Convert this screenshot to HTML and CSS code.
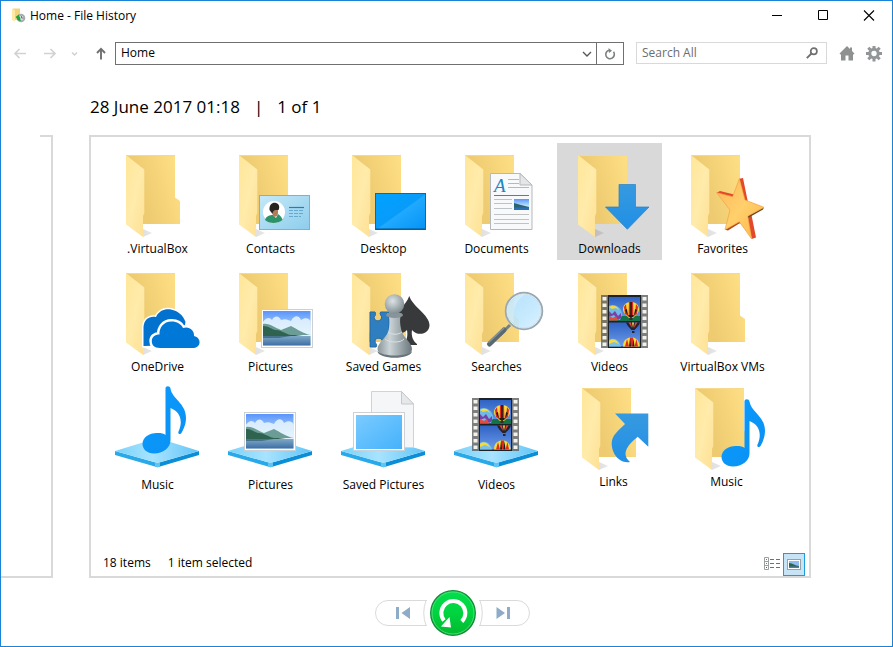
FILE: index.html
```html
<!DOCTYPE html>
<html lang="en">
<head>
<meta charset="utf-8">
<meta name="viewport" content="width=device-width, initial-scale=1">
<title>Home - File History</title>
<link rel="stylesheet" href="styles.css">
</head>
<body>
<svg class="sprite" width="0" height="0" aria-hidden="true">
  <defs>
    <linearGradient id="g-back" x1="0.2" x2="1" y1="0.3" y2="0"><stop offset="0" stop-color="#eecb70"/><stop offset="0.8" stop-color="#fddd83"/><stop offset="1" stop-color="#ffe28c"/></linearGradient>
    <linearGradient id="g-front" x1="0" x2="1" y1="0" y2="1"><stop offset="0" stop-color="#ffe698"/><stop offset="0.5" stop-color="#ffebab"/><stop offset="1" stop-color="#fee093"/></linearGradient>
    <linearGradient id="g-card" x1="0" x2="1" y1="0" y2="1"><stop offset="0" stop-color="#c5e8f8"/><stop offset="1" stop-color="#8dcdec"/></linearGradient>
    <linearGradient id="g-desk" x1="0" x2="1" y1="0" y2="1"><stop offset="0" stop-color="#00a2ff"/><stop offset="0.5" stop-color="#089bfa"/><stop offset="0.52" stop-color="#20a9ff"/><stop offset="1" stop-color="#0493f5"/></linearGradient>
    <linearGradient id="g-sky" x1="0" x2="0" y1="0" y2="1"><stop offset="0" stop-color="#5b94fb"/><stop offset="0.6" stop-color="#b9e2fb"/></linearGradient>
    <linearGradient id="g-water" x1="0" x2="0" y1="0" y2="1"><stop offset="0" stop-color="#7fa9c4"/><stop offset="1" stop-color="#3d6da6"/></linearGradient>
    <linearGradient id="g-arrow" x1="0" x2="0" y1="0" y2="1"><stop offset="0" stop-color="#379ae0"/><stop offset="1" stop-color="#208fe6"/></linearGradient>
    <linearGradient id="g-star" x1="0" x2="1" y1="0" y2="1"><stop offset="0" stop-color="#ffb65a"/><stop offset="0.5" stop-color="#ffd06c"/><stop offset="1" stop-color="#ffb347"/></linearGradient>
    <linearGradient id="g-pawn" x1="0" x2="1" y1="0" y2="0"><stop offset="0" stop-color="#8a9599"/><stop offset="0.35" stop-color="#cbd4d7"/><stop offset="1" stop-color="#6b777c"/></linearGradient>
    <radialGradient id="g-head" cx="0.4" cy="0.35" r="0.7"><stop offset="0" stop-color="#dce3e5"/><stop offset="1" stop-color="#7b878c"/></radialGradient>
    <linearGradient id="g-lens" x1="0" x2="1" y1="0" y2="1"><stop offset="0" stop-color="#a9dcf8"/><stop offset="0.6" stop-color="#c0e7fe"/><stop offset="1" stop-color="#d8f1ff"/></linearGradient>
    <linearGradient id="g-plate" x1="0" x2="1" y1="0" y2="0"><stop offset="0" stop-color="#7ad2fa"/><stop offset="0.45" stop-color="#a8e3ff"/><stop offset="1" stop-color="#62c5f6"/></linearGradient>
    <linearGradient id="g-note" x1="0" x2="1" y1="0" y2="1"><stop offset="0" stop-color="#0a9cff"/><stop offset="0.75" stop-color="#0a93f5"/><stop offset="1" stop-color="#0a84e4"/></linearGradient>
    <linearGradient id="g-blue" x1="0" x2="1" y1="0" y2="1"><stop offset="0" stop-color="#7bcbff"/><stop offset="1" stop-color="#45b2fb"/></linearGradient>
    <linearGradient id="g-film" x1="0" x2="0" y1="0" y2="1"><stop offset="0" stop-color="#2f63c4"/><stop offset="1" stop-color="#6d9bea"/></linearGradient>
    <linearGradient id="g-green" x1="0" x2="0" y1="0" y2="1"><stop offset="0" stop-color="#00e04c"/><stop offset="0.5" stop-color="#00d440"/><stop offset="1" stop-color="#00b92e"/></linearGradient>
    <linearGradient id="g-shade" x1="0" x2="1" y1="0" y2="0"><stop offset="0" stop-color="#000" stop-opacity="0.12"/><stop offset="1" stop-color="#000" stop-opacity="0"/></linearGradient>
  </defs>

  <symbol id="folder" viewBox="0 0 105 96">
    <path d="M75 76L82 78L72 81H75ZM38 86L47 90L38 94Z" fill="url(#g-shade)"/>
    <path d="M21 12H70V54.500L75 58V81H38Z" fill="url(#g-back)"/>
    <path d="M21 12H70L69.500 13H23Z" fill="#f6d98b"/>
    <path d="M21 12L39.300 26.500V70L38 73V94L21 81.500Z" fill="url(#g-front)"/>
  </symbol>

  <symbol id="photo" viewBox="0 0 52 39">
    <rect x="0.500" y="0.500" width="51" height="38" fill="#fff" stroke="#cdd0d2"/>
    <rect x="2" y="2" width="47.500" height="34.500" fill="url(#g-sky)"/>
    <path d="M2 13C5 8 9 8 11 11C14 6 18 7 20 11C25 9 27 11 30 12C33 6 38 6 40 11C44 8 48 9 49.500 12V27H2Z" fill="#e9f6fd" opacity="0.85"/>
    <path d="M2 26V15C9 14 14 19 20 21L30 17C36 20 43 25 49.500 26Z" fill="#6b9c96"/>
    <path d="M2 27V17C8 17 10 20 14 21C20 20 26 27 34 26L49.500 28Z" fill="#2f6350"/>
    <rect x="2" y="27" width="47.500" height="9.500" fill="url(#g-water)"/>
    <path d="M2 27H30L18 29H2Z" fill="#28536b" opacity="0.6"/>
  </symbol>

  <symbol id="balloon" viewBox="0 0 16 18">
    <path d="M8 0C13 0 16 3 16 7.500C16 11 12 14 10 16H6C4 14 0 11 0 7.500C0 3 3 0 8 0Z" fill="#f7d938"/>
    <path d="M3 2L1 5L2 12L5 14L3.500 7ZM6 0H10L10.500 15H5.500ZM13 2L15 5L14 12L11 14L12.500 7Z" fill="#e02b20"/>
    <path d="M7.200 0H8.800V16H7.200ZM2 8L4 7L5 14ZM14 8L12 7L11 14ZM5 13H11L10 15H6Z" fill="#201a1a"/>
    <rect x="6.500" y="15.500" width="3" height="2.500" fill="#3a2a22"/>
  </symbol>

  <symbol id="film" viewBox="0 0 47 53">
    <rect width="47" height="53" fill="#5c5f60" opacity="0.8"/>
    <rect x="7" width="33" height="53" fill="#1d2226"/>
    <g fill="#f3f1e8">
      <path d="M1.500 2h4v3.500h-4zM1.500 8.500h4V12h-4zM1.500 15h4v3.500h-4zM1.500 21.500h4V25h-4zM1.500 28h4v3.500h-4zM1.500 34.500h4V38h-4zM1.500 41h4v3.500h-4zM1.500 47.500h4V51h-4z"/>
      <path d="M41.500 2h4v3.500h-4zM41.500 8.500h4V12h-4zM41.500 15h4v3.500h-4zM41.500 21.500h4V25h-4zM41.500 28h4v3.500h-4zM41.500 34.500h4V38h-4zM41.500 41h4v3.500h-4zM41.500 47.500h4V51h-4z"/>
    </g>
    <rect x="8" y="2" width="31" height="24" fill="url(#g-film)"/>
    <rect x="8" y="21" width="31" height="5" fill="#137348"/>
    <path d="M8 11C14 8 21 13 21 20L19 25H8Z" fill="#6dbbe6"/>
    <path d="M8 12C13 9 17 12 18 15L15 13L11 14Z" fill="#f7d938"/>
    <path d="M8 16L11 19L14 16L17 21L20 18L20 23L17 25L13 20L8 22Z" fill="#7b3fa8"/>
    <path d="M8 21L12 23L15 21L17 25.500H8Z" fill="#e54b3d"/>
    <use href="#balloon" x="22" y="7" width="16" height="18"/>
    <rect x="8" y="27.500" width="31" height="24" fill="url(#g-film)"/>
    <path d="M25 27.500H39C38 31 35 33 33.500 35H30.500C29 33 26 31 25 27.500Z" fill="#26222c"/>
    <path d="M27.500 27.500L31 33L30 27.500ZM36.500 27.500L33 33L34 27.500Z" fill="#e3463c"/>
    <path d="M31 27.500L32 33L33 27.500Z" fill="#f7d938"/>
    <rect x="31" y="36" width="2.500" height="2" fill="#29232b"/>
    <path d="M8 45C13 42 18 45 20 51.500H8Z" fill="#78c2e8"/>
    <path d="M8 46C12 43 16 45 18 49L13 47L8 49Z" fill="#f7d938"/>
    <path d="M22 51.500C22 45 26 42.500 30.500 42.500C35 42.500 38 45 38.500 51.500Z" fill="#f7d938"/>
    <path d="M24 51.500L26 44L28 51.500ZM29 42.500H32V51.500H29ZM33.500 51.500L35.500 44L37 51.500Z" fill="#e02b20"/>
    <path d="M28 51.500L29 43L30 51.500ZM31.500 51.500L32.500 43L33.500 51.500Z" fill="#201a1a"/>
  </symbol>

  <symbol id="plate" viewBox="0 0 105 96">
    <path d="M10 72L52.500 84V88.300L10 76Z" fill="#2aa9e8"/>
    <path d="M94 72L52.500 84V88.300L94 76Z" fill="#0b8ed6"/>
    <path d="M50 83.300L52.500 84L55 83.300V87.500L52.500 88.300L50 87.500Z" fill="#5cc5f5"/>
    <path d="M10 72L52.500 59L94 72L52.500 84Z" fill="url(#g-plate)"/>
  </symbol>

  <symbol id="note" viewBox="0 0 46 68">
    <path d="M23.500 2.500C23.500 -0.500 28 -0.500 28.500 2.500C30 13 44 17 44 32C44 39 41 44 39.500 47C38.500 49 35.500 48 36.500 45.500C41 36 39 26 28.500 22V54C28.500 62 21 67.500 12 67.500C5 67.500 0.500 63 0.500 58C0.500 51 8 46.500 16 47C19 47 22 47.500 23.500 49Z" fill="url(#g-note)"/>
  </symbol>
</svg>

<div class="window">
  <header class="titlebar">
    <svg class="app-icon" width="16" height="16" viewBox="0 0 16 16" aria-hidden="true">
      <path d="M2 0.500H9V12H4Z" fill="#f3d47c"/><path d="M1 0.500L4 2.500V13.500L1 12Z" fill="#ffe9a4"/>
      <circle cx="10" cy="10" r="4.300" fill="#a7acae"/><circle cx="10.300" cy="10" r="2.300" fill="#d9dcdd"/>
      <path d="M10.500 8V10H12.500" stroke="#777" fill="none"/>
      <path d="M4.500 9L8 6.500V8.500C10 9 9 12 10 13C7 13 6 12 6 10.500Z" fill="#18a33c"/>
    </svg>
    <h1 class="title">Home - File History</h1>
    <div class="caption">
      <button type="button" class="caption-button" aria-label="Minimise"><svg width="12" height="12" viewBox="0 0 12 12"><path d="M1 5.500H11" stroke="#000"/></svg></button>
      <button type="button" class="caption-button" aria-label="Maximise"><svg width="12" height="12" viewBox="0 0 12 12"><path d="M1.500 0.500H10.500V9.500H1.500Z" fill="none" stroke="#000"/></svg></button>
      <button type="button" class="caption-button" aria-label="Close"><svg width="12" height="12" viewBox="0 0 12 12"><path d="M1 0.500L11 10.500M11 0.500L1 10.500" stroke="#000" stroke-width="1.100"/></svg></button>
    </div>
  </header>

  <nav class="toolbar">
    <div class="history">
      <button type="button" class="icon-button" aria-label="Back"><svg width="14" height="14" viewBox="0 0 14 14"><path d="M13 6.500H2M6.500 2L2 6.500L6.500 11" fill="none" stroke="#d2d2d2" stroke-width="1.700"/></svg></button>
      <button type="button" class="icon-button" aria-label="Forward"><svg width="14" height="14" viewBox="0 0 14 14"><path d="M1 6.500H12M7.500 2L12 6.500L7.500 11" fill="none" stroke="#d2d2d2" stroke-width="1.700"/></svg></button>
      <button type="button" class="icon-button" aria-label="Recent"><svg width="8" height="14" viewBox="0 0 8 14"><path d="M1 5.500L3.500 8L6 5.500" fill="none" stroke="#cfcfcf" stroke-width="1.300"/></svg></button>
      <button type="button" class="icon-button" aria-label="Up"><svg width="10" height="14" viewBox="0 0 10 14"><path d="M5 12.500V2.500M1 6L5 1.800L9 6" fill="none" stroke="#707070" stroke-width="1.900"/></svg></button>
    </div>
    <div class="address">
      <input class="field" type="text" value="Home" aria-label="Address">
      <button type="button" class="address-drop" aria-label="Locations"><svg width="10" height="10" viewBox="0 0 10 10"><path d="M1 3L5 7L9 3" fill="none" stroke="#555" stroke-width="1.300"/></svg></button>
      <button type="button" class="address-refresh" aria-label="Refresh"><svg width="12" height="12" viewBox="0 0 12 12"><path d="M9.500 3.800A4.300 4.300 0 1 1 5 2.200" fill="none" stroke="#7c8080" stroke-width="1.600"/><path d="M4.500 0L8 2.700L5 5Z" fill="#7c8080"/></svg></button>
    </div>
    <div class="search">
      <input class="field" type="text" placeholder="Search All" aria-label="Search">
      <button type="button" class="icon-button" aria-label="Search"><svg width="12" height="12" viewBox="0 0 12 12"><circle cx="7.800" cy="4.200" r="3.100" fill="none" stroke="#707070" stroke-width="1.700"/><path d="M5.500 6.500L0.800 11.200" stroke="#707070" stroke-width="1.900"/></svg></button>
    </div>
    <div class="tools">
      <button type="button" class="icon-button" aria-label="Home"><svg width="16" height="16" viewBox="0 0 16 16"><path d="M0.500 7.500L8 0L11 3V1.500H13V5L15.500 7.500L14.500 8.500H14V14.500H9.500V9.500H6.500V14.500H2V8.500H1.500Z" fill="#8e9190"/></svg></button>
      <button type="button" class="icon-button" aria-label="Settings"><svg width="16" height="16" viewBox="0 0 16 16"><circle cx="8" cy="7.500" r="4.200" fill="none" stroke="#929696" stroke-width="3"/><path d="M8 -0.500V2.500M8 12.500V15.500M0 7.500H3M13 7.500H16M2.300 1.800L4.400 3.900M11.600 11.100L13.700 13.200M2.300 13.200L4.400 11.100M11.600 3.900L13.700 1.800" stroke="#929696" stroke-width="3"/></svg></button>
    </div>
  </nav>

  <h2 class="version"><span>28 June 2017 01:18</span><span class="version-bar">|</span><span>1 of 1</span></h2>

  <main class="stage">
    <div class="previous"></div>
    <section class="panel">
      <ul class="files">
        <li><button type="button" class="tile"><svg class="art" viewBox="0 0 105 96"><use href="#folder"/></svg><span class="name">.VirtualBox</span></button></li>
        <li><button type="button" class="tile"><svg class="art" viewBox="0 0 105 96"><use href="#folder"/>
          <rect x="41.500" y="52.500" width="50" height="34" fill="url(#g-card)" stroke="#7eb2cc"/>
          <circle cx="56" cy="69" r="11" fill="#fff"/>
          <path d="M47 77C48 73 52 72 55 72L58 75L60 71C63 73 64 75 64.500 77C60 81 51 81 47 77Z" fill="#2c9368"/>
          <path d="M53 65H60V70C60 73 57 75 55 73Z" fill="#b17b58"/>
          <path d="M51.500 67C51 61 55 59 58 60C62 61 61.500 65 60.500 67C58 67 55 66 54.500 71Z" fill="#26241f"/>
          <path d="M71 64.500H86" stroke="#317aa8" stroke-width="1.200"/><path d="M71 67.500H86M71 70.500H86M71 73.500H83" stroke="#67a9cc" stroke-dasharray="4 1"/>
        </svg><span class="name">Contacts</span></button></li>
        <li><button type="button" class="tile"><svg class="art" viewBox="0 0 105 96"><use href="#folder"/>
          <rect x="44.500" y="50.500" width="50" height="36" fill="url(#g-desk)" stroke="#1466a0"/><path d="M45 86H94" stroke="#075488"/>
        </svg><span class="name">Desktop</span></button></li>
        <li><button type="button" class="tile"><svg class="art" viewBox="0 0 105 96"><use href="#folder"/>
          <path d="M46.500 30.500H76L88 42V86.500H46.500Z" fill="#f8f9fa" stroke="#b5b8ba"/><path d="M76 30.500V42H88Z" fill="#e4e6e8" stroke="#b5b8ba"/>
          <text class="doc-letter" x="50" y="49">A</text>
          <path d="M50 52.500H85" stroke="#1b95c9"/><path d="M64 36.500H75M64 40.500H75M64 44.500H85" stroke="#8ec6df"/>
          <path d="M50 56.500H68M50 60.500H68M50 65.500H68M50 71.500H85M50 76.500H85M50 80.500H85" stroke="#c0c3c6"/>
          <rect x="70" y="56" width="15" height="11" fill="url(#g-sky)"/><path d="M70 60L77 62L85 64V67H70Z" fill="#2b6374"/><path d="M70 64.500H85V67H70Z" fill="#2a72b5"/>
        </svg><span class="name">Documents</span></button></li>
        <li><button type="button" class="tile tile-selected" aria-pressed="true"><svg class="art" viewBox="0 0 105 96"><use href="#folder"/>
          <path d="M62 41.500H78.500V64H92L70.300 86.300L48.500 64H62Z" fill="url(#g-arrow)" stroke="#2783c7" stroke-width="0.700"/>
        </svg><span class="name">Downloads</span></button></li>
        <li><button type="button" class="tile"><svg class="art" viewBox="0 0 105 96"><use href="#folder"/>
          <path d="M69.300 35.700L73 35L77.800 58.500L74 57ZM77 74L81.500 72L86 94.500L81.700 96ZM46.700 49.700L50 48L64 51.500L62.700 55Z" fill="#e2492a"/>
          <path d="M94 64.300L93 66.500L78 75V73Z" fill="#6e4820"/><path d="M55 86.700L58 87.500L70 80V78Z" fill="#b34a1d"/>
          <path d="M69.300 35.700L75 57L94 64.300L77.700 73L81.700 96L69.300 78.700L55 86.700L60 67L46.700 49.700L62.700 53.700Z" fill="url(#g-star)" stroke="#f3a23f" stroke-width="0.700"/>
        </svg><span class="name">Favorites</span></button></li>

        <li><button type="button" class="tile"><svg class="art" viewBox="0 0 105 96"><use href="#folder"/>
          <path d="M38.500 85V66C39 58 45 54.500 51 56C54 49.500 60 47.500 66 48.500C73 50 78 54 80.500 61L76 84Z" fill="#0463b8" stroke="#fff" stroke-width="3"/>
          <path d="M38.500 85V66C39 58 45 54.500 51 56C54 49.500 60 47.500 66 48.500C73 50 78 54 80.500 61L76 84Z" fill="#0372cf"/>
          <path d="M55 87C49 87 46.800 84 46.800 80C46.800 76 50 73.500 54.500 73.500C54 67 58.500 60.500 66.500 60.500C72 60.500 76 63 78 67C84 65 89.500 69 89 75C93 76 95 79 94.500 82C94 85.500 91 87 88 87Z" fill="none" stroke="#fff" stroke-width="5"/>
          <path d="M55 87C49 87 46.800 84 46.800 80C46.800 76 50 73.500 54.500 73.500C54 67 58.500 60.500 66.500 60.500C72 60.500 76 63 78 67C84 65 89.500 69 89 75C93 76 95 79 94.500 82C94 85.500 91 87 88 87Z" fill="#0078d7"/>
        </svg><span class="name">OneDrive</span></button></li>
        <li><button type="button" class="tile"><svg class="art" viewBox="0 0 105 96"><use href="#folder"/><use href="#photo" x="43" y="48" width="52" height="39"/></svg><span class="name">Pictures</span></button></li>
        <li><button type="button" class="tile"><svg class="art" viewBox="0 0 105 96"><use href="#folder"/>
          <path d="M39 51H44C46 55 42 55 43.500 58C45 61 50 60 50.500 57C51 54 48 54 49.500 51H58V86H52C50 83 53 82 51 79C49 76 44 77 44 80C44 83 47 83 45 86H39Z" fill="#2f7fc0" stroke="#2468a5"/>
          <path d="M78.300 35C81 45 98.500 54 98.500 64C98.500 73 87 76 81 69C80 75 82 80 86 83V84H72V83C76 80 77 75 76 69C70 75 61 72 61 64C61 54 75 45 78.300 35Z" fill="#37393a"/>
          <path d="M56 52.500C60 56 59 65 57 71C55 77 46.500 82 46.500 88C46.500 98 81 98 81 88C81 82 73 77 71 71C69 65 68 56 71 52.500Z" fill="url(#g-pawn)"/>
          <path d="M46.500 90C52 96 75 96 81 90C81 99 46.500 99 46.500 90Z" fill="#69757a"/>
          <path d="M54 78C58 82 70 82 73 78M57 71C61 74 67 74 71 71" fill="none" stroke="#dbe1e3"/>
          <ellipse cx="63.500" cy="54" rx="8.500" ry="3" fill="#87949a"/><circle cx="63.500" cy="43" r="9.800" fill="url(#g-head)"/>
        </svg><span class="name">Saved Games</span></button></li>
        <li><button type="button" class="tile"><svg class="art" viewBox="0 0 105 96"><use href="#folder"/>
          <path d="M66 64L56 74" stroke="#718088" stroke-width="3"/><path d="M60 69L45.500 83" stroke="#5a6870" stroke-width="5" stroke-linecap="round"/><path d="M60 67L44.500 81.500" stroke="#84929a" stroke-width="1.500"/>
          <circle cx="80" cy="50" r="18" fill="url(#g-lens)" fill-opacity="0.88" stroke="#98a9b3" stroke-width="2.500"/><circle cx="80" cy="50" r="17" fill="none" stroke="#e4eef4"/>
          <path d="M63 50C63 40 72 32 82 33C74 38 68 46 70 62C66 60 63 56 63 50Z" fill="#fff" opacity="0.25"/>
        </svg><span class="name">Searches</span></button></li>
        <li><button type="button" class="tile"><svg class="art" viewBox="0 0 105 96"><use href="#folder"/><use href="#film" x="44" y="34" width="47" height="53"/></svg><span class="name">Videos</span></button></li>
        <li><button type="button" class="tile"><svg class="art" viewBox="0 0 105 96"><use href="#folder"/></svg><span class="name">VirtualBox VMs</span></button></li>

        <li><button type="button" class="tile"><svg class="art" viewBox="0 0 105 96"><use href="#plate"/><use href="#note" x="37" y="7" width="46" height="68"/></svg><span class="name">Music</span></button></li>
        <li><button type="button" class="tile"><svg class="art" viewBox="0 0 105 96"><use href="#plate"/><use href="#photo" x="26" y="33" width="52" height="39"/></svg><span class="name">Pictures</span></button></li>
        <li><button type="button" class="tile"><svg class="art" viewBox="0 0 105 96"><use href="#plate"/>
          <path d="M40.500 12.500H70.500L82.500 25V68.500H40.500Z" fill="#f5f6f7" stroke="#d0d3d5"/><path d="M70.500 12.500V25H82.500Z" fill="#e6e8ea" stroke="#c6c9cb"/>
          <rect x="22.500" y="33.500" width="51" height="38" fill="#fff" stroke="#cbd1d5"/><rect x="25" y="36" width="46" height="34" fill="url(#g-blue)"/>
        </svg><span class="name">Saved Pictures</span></button></li>
        <li><button type="button" class="tile"><svg class="art" viewBox="0 0 105 96"><use href="#plate"/><use href="#film" x="28" y="19" width="47" height="53"/></svg><span class="name">Videos</span></button></li>
        <li><button type="button" class="tile tile-loose"><svg class="art" viewBox="0 3 105 93"><use href="#folder" width="105" height="96"/>
          <path d="M54 37.500H87.300V70.700L76.700 60.700C68 68 59 77 69 86C58 88 50.500 77 50.700 67C51 59 57 55 64 48Z" fill="url(#g-arrow)"/>
        </svg><span class="name">Links</span></button></li>
        <li><button type="button" class="tile tile-loose"><svg class="art" viewBox="0 3 105 93"><use href="#folder" width="105" height="96"/><use href="#note" x="47" y="23" width="46" height="68"/></svg><span class="name">Music</span></button></li>
      </ul>
      <footer class="status">
        <span>18 items</span><span>1 item selected</span>
        <div class="views">
          <button type="button" class="view" aria-label="Details"><svg width="16" height="15" viewBox="0 0 16 15"><path d="M0.500 0.500H4.500V12.500H0.500ZM0.500 4.500H4.500M0.500 8.500H4.500" fill="none" stroke="#9a9fa2"/><path d="M2 2H3V3H2ZM2 6H3V7H2Z" fill="#777"/><path d="M2 10H3V11H2Z" fill="#d22"/><path d="M6 2.500H10M12 2.500H16M6 6.500H10M12 6.500H16M6 10.500H10M12 10.500H16" stroke="#707070"/></svg></button>
          <button type="button" class="view view-on" aria-label="Large icons" aria-pressed="true"><svg width="14" height="11" viewBox="0 0 14 11"><rect x="0.500" y="0.500" width="13" height="10" fill="#fff" stroke="#9aa0a3"/><rect x="2" y="2" width="10" height="7" fill="#8bbdf0"/><path d="M2 4C6 4 8 7 12 7V9H2Z" fill="#2f6350"/><path d="M2 7.500H12V9H2Z" fill="#4f7fa8"/></svg></button>
        </div>
      </footer>
    </section>
  </main>

  <div class="player">
    <button type="button" class="step" aria-label="Previous version"><svg width="55" height="26" viewBox="0 0 55 26"><path d="M52 0.500H13A12.500 12.500 0 0 0 13 25.500H52M51 0.500Q46.500 13 51 25.500" fill="none" stroke="#dadada"/><path d="M21 7H24V19H21ZM35 7V19L26.500 13Z" fill="#8eabc8"/></svg></button>
    <button type="button" class="restore" aria-label="Restore"><svg width="46" height="46" viewBox="0 0 46 46"><circle cx="23" cy="23" r="22.300" fill="url(#g-green)" stroke="#128a37" stroke-width="1.300"/><circle cx="23" cy="23" r="21" fill="none" stroke="#5be083" stroke-width="0.800"/><path d="M31.800 31.500A12 12 0 1 0 14 30.500" fill="none" stroke="#fff" stroke-width="4"/><path d="M11 36.500L19.500 27L21 37.500Z" fill="#fff"/></svg></button>
    <button type="button" class="step" aria-label="Next version"><svg width="55" height="26" viewBox="0 0 55 26"><path d="M3 0.500H41A12.500 12.500 0 0 1 41 25.500H3M4 0.500Q8.500 13 4 25.500" fill="none" stroke="#dadada"/><path d="M34 7H31V19H34ZM20.500 7V19L29 13Z" fill="#8eabc8"/></svg></button>
  </div>
</div>
</body>
</html>
```
FILE: styles.css
```css
* {
  box-sizing: border-box;
}

body {
  margin: 0;
  background: #fff;
  color: #000;
  font: 12px/20px "Open Sans", "Noto Sans", sans-serif;
}

button,
input {
  margin: 0;
  padding: 0;
  border: 0;
  background: none;
  color: inherit;
  font: inherit;
}

svg {
  display: block;
  flex: none;
}

.sprite {
  position: absolute;
}

.window {
  display: flex;
  flex-direction: column;
  min-height: 100vh;
  border: 1px solid #1883d7;
}

.titlebar {
  display: flex;
  align-items: center;
  height: 29px;
  padding-left: 10px;
}

.title {
  flex: 1;
  margin: 0 0 0 3px;
  font-size: 12px;
  font-weight: 400;
}

.caption {
  display: flex;
}

.caption-button {
  display: grid;
  place-items: center;
  width: 46px;
  height: 28px;
}

.toolbar {
  display: flex;
  align-items: center;
  gap: 12px;
  margin-top: 12px;
  padding: 0 10px 0 12px;
}

.history {
  display: flex;
  align-items: center;
  gap: 14px;
}

.history .icon-button:first-child {
  margin-right: 2px;
}

.history .icon-button:last-child {
  margin: 0 -3px 0 3px;
}

.icon-button {
  display: block;
}

.address {
  display: flex;
  flex: 1;
  height: 23px;
  border: 1px solid #707070;
}

.field {
  flex: 1;
  min-width: 0;
  height: 20px;
  padding: 0 5px;
  outline: 0;
}

.field::placeholder {
  color: #6d6d6d;
  opacity: 1;
}

.address-drop,
.address-refresh {
  display: grid;
  place-items: center;
}

.address-drop {
  width: 18px;
}

.address-refresh {
  width: 27px;
  border-left: 1px solid #707070;
}

.search {
  display: flex;
  align-items: center;
  align-self: flex-start;
  width: 191px;
  height: 22px;
  padding-right: 8px;
  border: 1px solid #d9d9d9;
}

.tools {
  display: flex;
  gap: 11px;
}

.version {
  display: flex;
  gap: 14px;
  margin: 30px 0 16px 89px;
  font-size: 17px;
  font-weight: 400;
  line-height: 24px;
}

.stage {
  display: flex;
  flex: 1;
  gap: 36px;
  padding-right: 81px;
}

.previous {
  width: 52px;
  border: solid #d9d9d9;
  border-width: 0 2px 2px 0;
  background: linear-gradient(#d9d9d9, #d9d9d9) top right / 11px 2px no-repeat;
}

.panel {
  display: flex;
  flex: 1;
  flex-direction: column;
  justify-content: space-between;
  border: 2px solid #d9d9d9;
}

.files {
  display: grid;
  grid-template-columns: repeat(auto-fill, 105px);
  gap: 1px 8px;
  margin: 0;
  padding: 6px 14px 0;
  list-style: none;
}

.tile {
  display: flex;
  flex-direction: column;
  align-items: center;
  width: 100%;
  padding-bottom: 1px;
}

.tile-selected {
  background: #d9d9d9;
}

.tile-loose {
  padding-left: 8px;
}

.art {
  width: 105px;
  overflow: visible;
}

.name {
  white-space: nowrap;
}

.doc-letter {
  fill: #1b87c4;
  font: italic 19px "Liberation Serif", serif;
}

.status {
  display: flex;
  align-items: flex-start;
  gap: 17px;
  padding: 0 4px 0 12px;
}

.views {
  display: flex;
  gap: 3px;
  margin-left: auto;
}

.view {
  display: grid;
  place-items: center;
}

.view-on {
  width: 22px;
  height: 23px;
  border: 1px solid #1a9fdc;
  background: #c6e4f5;
}

.player {
  display: flex;
  align-items: center;
  justify-content: center;
  padding: 12px 0 10px 13px;
}

.step,
.restore {
  display: block;
}
```
